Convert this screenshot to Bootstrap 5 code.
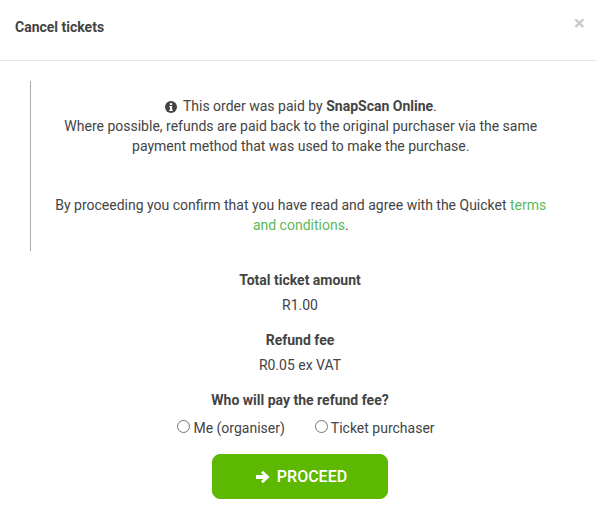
<!DOCTYPE html>
<html lang="en">
<head>
<meta charset="utf-8">
<title>Cancel tickets</title>
<link href="https://cdn.jsdelivr.net/npm/bootstrap@5.3.0/dist/css/bootstrap.min.css" rel="stylesheet">
<style>
html,body{height:100%}
body{font-family:Roboto,sans-serif;font-size:14px;line-height:20px;color:#444;background:#fff;overflow:hidden}
.dlg-head{height:61px;padding:0 15px;border-bottom:1px solid #e5e5e5}
.dlg-title{font-size:14px;font-weight:700;line-height:20px;margin:0;padding-top:17px;color:#444}
.dlg-x{position:absolute;top:13px;right:12px;font-size:21px;font-weight:700;line-height:20px;color:#000;opacity:.2;background:none;border:0;padding:0}
.notice{margin:20px 15px 0 30px;height:170px;border-left:1px solid #aaa;padding:15px 31.5px 0 20px;text-align:center}
.notice p{margin:0}
.gap-para{margin-top:39px!important}
.notice a{color:#5cb85c;text-decoration:none}
.info-ic{width:12px;height:12px;vertical-align:-1.5px;margin-right:3px}
.stats{text-align:center;padding:19px 14px 0 17px}
.stat-t{font-weight:700;margin:0}
.stat-v{margin:5px 0 15px}
.r-row{gap:30px;padding-left:12px;margin-top:8px}
.r-lbl{display:inline-flex;align-items:flex-start;gap:3px;margin:0}
.r-lbl input{appearance:none;width:13px;height:13px;border:1px solid #767676;border-radius:50%;margin:2px 0 0;background:#fff}
.go-wrap{margin-top:16px}
.go{background:#5cb800;border-color:#5cb800;color:#fff;width:176px;height:45px;font-size:16px;font-weight:500;border-radius:8px;padding:0 0 0 3px;display:inline-flex;align-items:center;justify-content:center;gap:7px}
.go:hover{background:#5cb800;border-color:#5cb800;color:#fff}
</style>
</head>
<body>
<div class="position-relative">
  <div class="dlg-head">
    <h1 class="dlg-title">Cancel tickets</h1>
    <button class="dlg-x" type="button" aria-label="Close">×</button>
  </div>
  <div class="notice">
    <p><svg class="info-ic" viewBox="0 0 12 12" aria-hidden="true"><circle cx="6" cy="6" r="6" fill="#444"/><rect x="4.9" y="2.1" width="2.2" height="1.9" fill="#fff"/><path d="M4.400 5h2.700v3.800h.7V10H4.300V8.800H5V6.200h-.6z" fill="#fff"/></svg> This order was paid by <strong>SnapScan Online</strong>.<br>Where possible, refunds are paid back to the original purchaser via the same payment method that was used to make the purchase.</p>
    <p class="gap-para">By proceeding you confirm that you have read and agree with the Quicket <a href="#">terms and conditions</a>.</p>
  </div>
  <div class="stats">
    <p class="stat-t">Total ticket amount</p>
    <p class="stat-v">R1.00</p>
    <p class="stat-t">Refund fee</p>
    <p class="stat-v">R0.05 ex VAT</p>
    <p class="stat-t">Who will pay the refund fee?</p>
    <div class="d-flex justify-content-center r-row">
      <label class="r-lbl"><input type="radio" name="payer"> Me (organiser)</label>
      <label class="r-lbl"><input type="radio" name="payer"> Ticket purchaser</label>
    </div>
    <div class="go-wrap">
      <button class="btn go" type="button"><svg width="14" height="14" viewBox="0 0 14 14" aria-hidden="true"><path d="M0 5h7.200L5 2.800 7 .8 13.600 7 7 13.200l-2-2L7.200 9H0z" fill="#fff"/></svg>PROCEED</button>
    </div>
  </div>
</div>
</body>
</html>
